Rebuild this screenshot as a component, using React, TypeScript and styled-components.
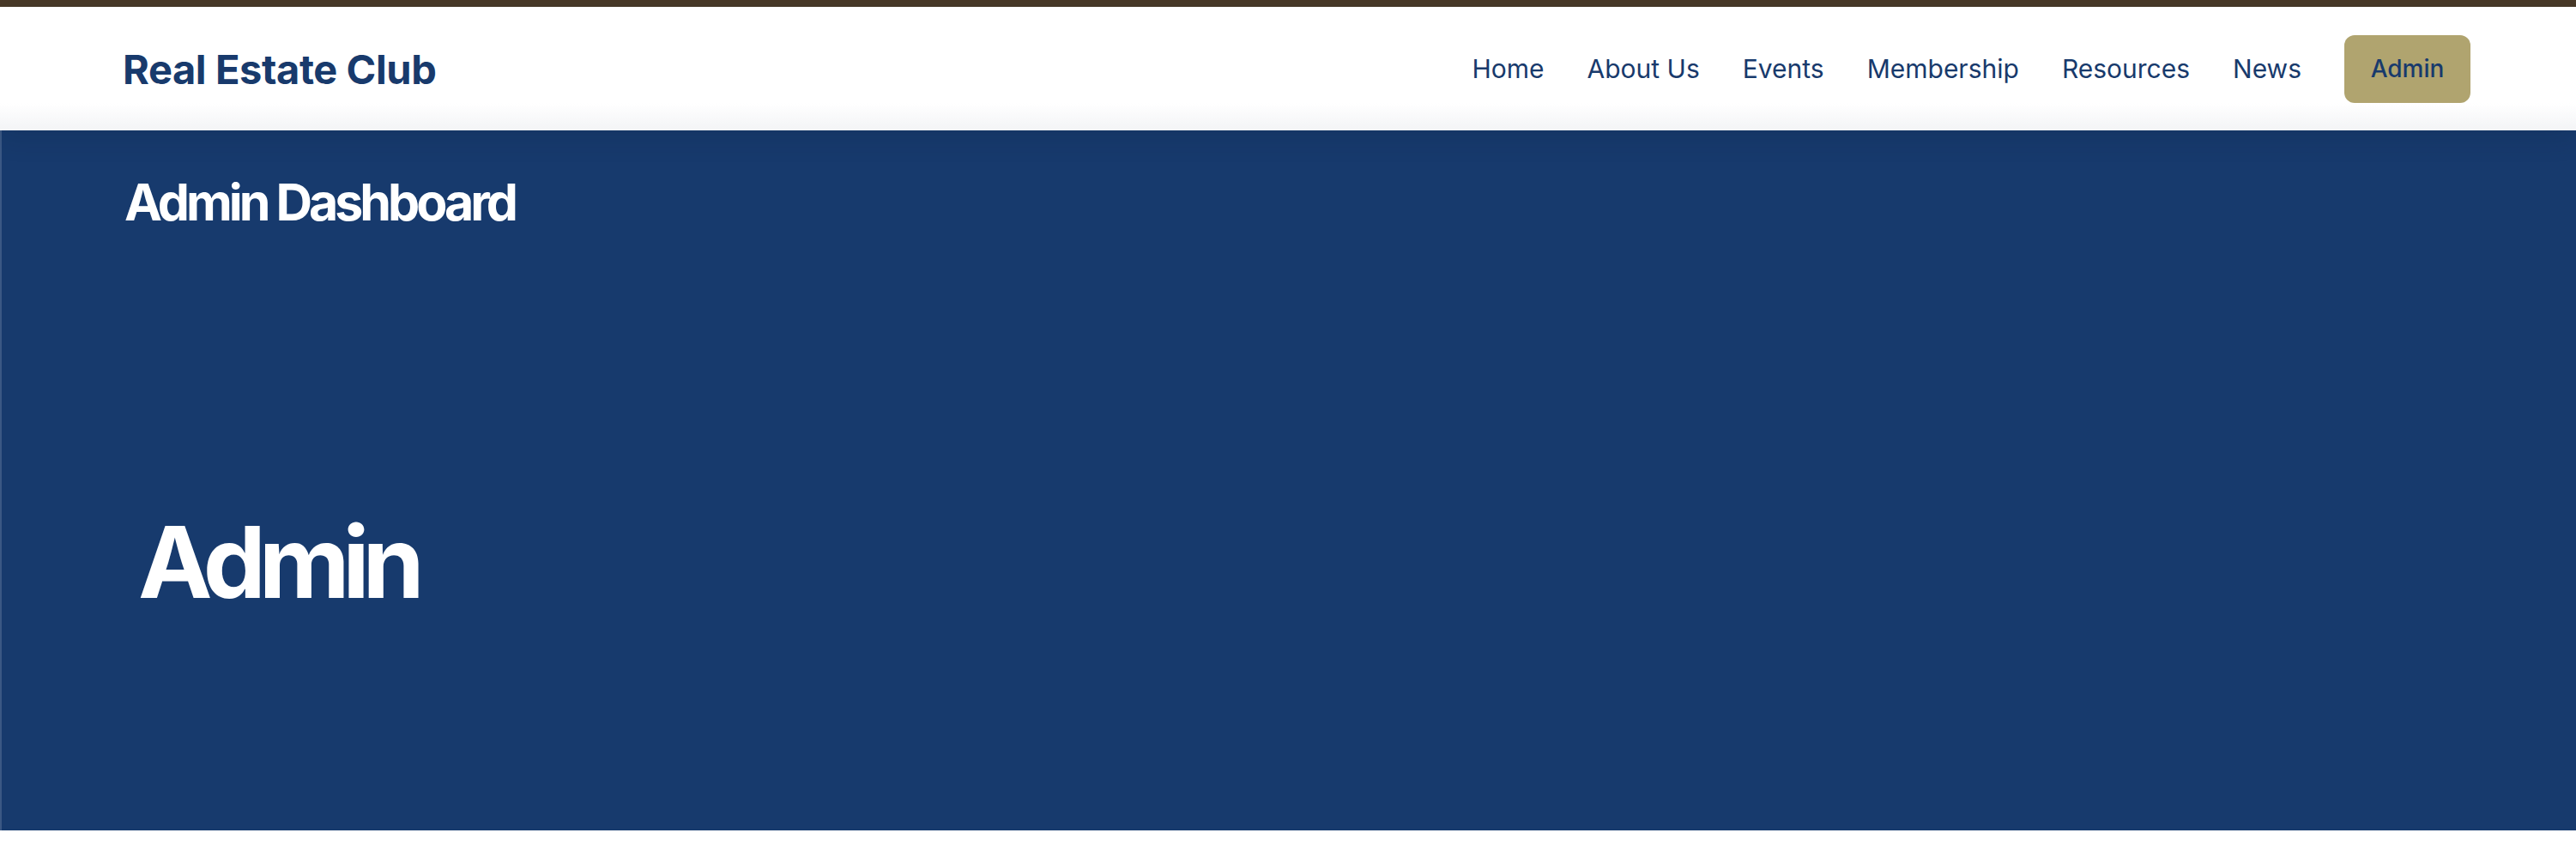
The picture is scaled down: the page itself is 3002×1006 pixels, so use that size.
import React from "react";
import styled, { createGlobalStyle } from "styled-components";

const GlobalStyle = createGlobalStyle`
  html, body {
    margin: 0;
    padding: 0;
    background: #ffffff;
    font-family: Inter, "Noto Sans", "Liberation Sans", sans-serif;
  }
  * { box-sizing: border-box; }
`;

const Page = styled.div`
  display: flex;
  flex-direction: column;
  min-height: 1006px;
  background: #ffffff;
`;

const TopStripe = styled.div`
  height: 8px;
  background: #4a3a27;
`;

const Header = styled.header`
  position: relative;
  z-index: 2;
  height: 144px;
  display: flex;
  align-items: center;
  justify-content: space-between;
  padding: 0 123px 0 143px;
  background: linear-gradient(
    to bottom,
    #ffffff 0%,
    #ffffff 78%,
    #f3f4f6 100%
  );
  box-shadow: 0 6px 30px rgba(10, 25, 50, 0.18);
`;

const Logo = styled.a`
  font-size: 47px;
  font-weight: 700;
  color: #183a6c;
  letter-spacing: -0.4px;
  text-decoration: none;
`;

const Nav = styled.nav`
  display: flex;
  align-items: center;
  gap: 50px;
`;

const NavLink = styled.a`
  font-size: 30px;
  font-weight: 400;
  color: #183a6c;
  text-decoration: none;
`;

const AdminButton = styled.a`
  display: flex;
  align-items: center;
  justify-content: center;
  height: 79px;
  width: 147px;
  border-radius: 12px;
  background: #b0a46f;
  color: #183a6c;
  font-size: 28px;
  font-weight: 500;
  text-decoration: none;
`;

const Hero = styled.main`
  position: relative;
  z-index: 1;
  height: 816px;
  display: flex;
  flex-direction: column;
  padding: 48px 123px 0 143px;
  background: #173a6d;
  border-left: 2px solid #3b5884;
`;

const Title = styled.h1`
  margin: 0;
  font-size: 59px;
  line-height: 72px;
  font-weight: 700;
  letter-spacing: -4px;
  color: #ffffff;
`;

const Block = styled.section`
  margin-top: 325px;
  padding-left: 16px;
`;

const BigLabel = styled.h2`
  margin: 0;
  font-size: 116px;
  line-height: 116px;
  font-weight: 700;
  letter-spacing: -8.2px;
  color: #ffffff;
`;

const navItems = ["Home", "About Us", "Events", "Membership", "Resources", "News"];

export default function App() {
  return (
    <>
      <GlobalStyle />
      <Page>
        <TopStripe />
        <Header>
          <Logo href="#">Real Estate Club</Logo>
          <Nav>
            {navItems.map((item) => (
              <NavLink key={item} href="#">
                {item}
              </NavLink>
            ))}
            <AdminButton href="#">Admin</AdminButton>
          </Nav>
        </Header>
        <Hero>
          <Title>Admin Dashboard</Title>
          <Block>
            <BigLabel>Admin</BigLabel>
          </Block>
        </Hero>
      </Page>
    </>
  );
}
